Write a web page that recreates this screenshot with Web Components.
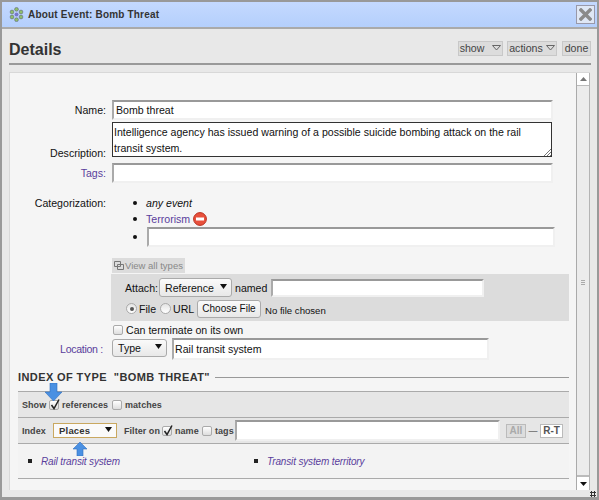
<!DOCTYPE html>
<html><head><meta charset="utf-8"><style>
html,body{margin:0;padding:0;background:#e8e8e8}
body{width:599px;height:500px;overflow:hidden;font:10.6px "Liberation Sans",Arial,sans-serif;color:#111}
</style></head><body>
<x-window></x-window>
<script>
function def(name,css,html){
  customElements.define(name,class extends HTMLElement{
    constructor(){super();const s=this.attachShadow({mode:'open'});
      s.innerHTML='<style>'+css+'</style>'+html;}
  });
}
def('x-field',`:host{display:block;box-sizing:border-box;background:#fff;border:2px solid #f0f0f0;border-top:2px solid #999;border-left:2px solid #aaa;padding:0 1px;white-space:nowrap;overflow:hidden;font:10.6px/16px "Liberation Sans",sans-serif;color:#111;flex:none}`,`<slot></slot>`);
def('x-check',`:host{display:inline-block;box-sizing:border-box;width:10px;height:10px;border:1px solid #aaa;border-radius:2px;background:linear-gradient(#fff,#ddd);position:relative;flex:none}
svg{position:absolute;left:0;top:-3px;display:none}:host([on]) svg{display:block}`,`<svg width="11" height="13" viewBox="0 0 11 13"><path d="M1.500 7l2.500 3.500L9 1.500" fill="none" stroke="#222" stroke-width="1.500"/></svg>`);
def('x-radio',`:host{display:inline-block;box-sizing:border-box;width:11px;height:11px;border:1px solid #aaa;border-radius:50%;background:linear-gradient(#e4e4e4,#fff);position:relative;flex:none}
:host([on])::after{content:"";position:absolute;left:2.500px;top:2.500px;width:4px;height:4px;border-radius:50%;background:#555}`,``);
def('x-select',`:host{display:flex;align-items:center;justify-content:space-between;box-sizing:border-box;height:19px;border:1px solid #aaa;border-radius:3px;background:linear-gradient(#fafafa,#e8e8e8);padding:0 4px 0 5px;font:10.6px "Liberation Sans",sans-serif;color:#111;flex:none}
svg{flex:none}`,`<slot></slot><svg width="7" height="5" viewBox="0 0 7 5" style="margin-top:-3px"><path d="M0 0h7L3.500 5z" fill="#111"/></svg>`);
def('x-head-btn',`:host{display:inline-flex;align-items:center;justify-content:center;box-sizing:border-box;height:15px;background:#dcdcdc;border:1px solid #c8c8c8;font:10.6px "Liberation Sans",sans-serif;color:#444;gap:6px}
svg{display:none}:host([menu]) svg{display:block}`,`<slot></slot><svg width="9" height="6" viewBox="0 0 9 6"><path d="M.5.5h8L4.500 5z" fill="none" stroke="#666"/></svg>`);
def('x-titlebar',`:host{display:flex;align-items:center;box-sizing:border-box;height:27px;background:linear-gradient(#c4d9ff,#b4cffc);border-bottom:2px solid #aaa;padding:0 2px 0 7px;font:bold 10px "Liberation Sans",sans-serif;color:#333}
.t{flex:1;margin-left:4px;letter-spacing:.19px}
.x{width:19px;height:19px;box-sizing:border-box;background:#dfe7f5;border:1px solid #fff;outline:1px solid #99a;outline-offset:-1px;display:flex;align-items:center;justify-content:center}`,
`<svg width="15" height="15" viewBox="0 0 15 15"><g fill="#8fbf6a" stroke="#557" stroke-width=".5"><circle cx="7.5" cy="2.3" r="1.9"/><circle cx="12" cy="5" r="1.9"/><circle cx="12" cy="10" r="1.9"/><circle cx="7.5" cy="12.7" r="1.9"/><circle cx="3" cy="10" r="1.9"/><circle cx="3" cy="5" r="1.9"/></g><circle cx="7.5" cy="7.5" r="2" fill="#77c"/></svg><span class="t"><slot></slot></span><span class="x"><svg width="13" height="13" viewBox="0 0 13 13"><path d="M2 2l9 9M11 2l-9 9" stroke="#8a8a8a" stroke-width="3.4" stroke-linecap="square"/></svg></span>`);
def('x-scrollbar',`:host{display:flex;flex-direction:column;justify-content:space-between;box-sizing:border-box;width:14px;background:#ececec;border-left:1px solid #aaa;border-right:1px solid #b4b4b4;position:relative;flex:none}
.b{height:12px;background:#fff;border-bottom:1px solid #bbb;display:flex;align-items:center;justify-content:center}
.b.d{border-bottom:0;border-top:2px solid #bbb;height:13px}
.g{position:absolute;left:4px;top:207px;width:4px;height:5px;border-top:1px solid #aaa;border-bottom:1px solid #aaa;box-sizing:border-box}.g::after{content:"";position:absolute;left:0;right:0;top:1px;height:1px;background:#aaa}`,
`<div class="b"><svg width="7" height="4"><path d="M0 4h7L3.500 0z" fill="#777"/></svg></div><div class="g"></div><div class="b d"><svg width="7" height="4"><path d="M0 0h7L3.500 4z" fill="#111"/></svg></div>`);
def('x-row',`:host{display:flex;box-sizing:border-box}`,`<slot></slot>`);
def('x-label',`:host{display:block;width:96px;margin-right:6px;text-align:right;flex:none;font:10.6px/16px "Liberation Sans",sans-serif;color:#111}
:host([link]){color:#5a3e9c}`,`<slot></slot>`);
def('x-tinybtn',`:host{display:inline-flex;align-items:center;justify-content:center;box-sizing:border-box;height:14px;font:bold 10px "Liberation Sans",sans-serif;border:1px solid #bbb;background:#fff;color:#555;flex:none;letter-spacing:0}
:host([off]){background:#ddd;color:#aaa}`,`<slot></slot>`);
def('x-bar',`:host{display:flex;align-items:center;box-sizing:border-box;background:#e6e6e6;border-bottom:1px solid #aaa;padding-left:4px;font:bold 9px "Liberation Sans",sans-serif;color:#444;letter-spacing:.05px;white-space:nowrap}`,`<slot></slot>`);
def('x-arrow',`:host{position:absolute;display:block}`,`<slot></slot>`);
def('x-form',`:host{display:block;position:relative;box-sizing:border-box;flex:1;min-width:0;padding-top:27px;font:10.6px "Liberation Sans",sans-serif;color:#111;overflow:hidden}
.a{color:#5a3e9c}
.bul{width:4px;height:4px;border-radius:50%;background:#111;flex:none;margin:0 9px 0 0}
.li{display:flex;align-items:center;height:16px;margin-left:123px;position:relative}
.view{display:flex;align-items:center;gap:1px;box-sizing:border-box;margin:0 0 1px 102px;width:73px;height:15px;background:#dcdcdc;padding-left:2px;color:#888;white-space:nowrap;font-size:9.5px}
.view svg{flex:none}
.att{box-sizing:border-box;margin-left:101px;width:458px;height:47px;background:#dcdcdc;padding:3px 0 0 14px;white-space:nowrap}
.r{display:flex;align-items:center}
.btn{display:flex;align-items:center;justify-content:center;box-sizing:border-box;width:64px;height:18px;border:1px solid #aaa;border-radius:3px;background:linear-gradient(#fafafa,#e8e8e8);color:#111;font-size:10px}
h3{display:flex;align-items:center;margin:9px 0 6px 8px;width:551px;font:bold 11px/16px "Liberation Sans",sans-serif;color:#333;letter-spacing:.4px;white-space:nowrap}
h3::after{content:"";flex:1;height:1px;background:#999;margin-left:5px}
.bars{margin-left:8px;width:551px;border-top:1px solid #aaa;position:relative}
.list{display:flex;height:35px;align-items:center;border-bottom:1px solid #aaa;background:#f3f3f3;font:italic 10px "Liberation Sans",sans-serif;letter-spacing:-.15px;color:#5a3e9c;padding-left:10px;box-sizing:border-box;white-space:nowrap}
.sq{width:4px;height:4px;background:#222;margin-right:9px;flex:none}
`,`
<x-row style="height:22px"><x-label style="padding-top:2px">Name:</x-label><x-field style="width:441px;height:20px;padding-left:2px">Bomb threat</x-field></x-row>
<x-row style="height:35px"><x-label style="padding-top:24px;line-height:14px;">Description:</x-label>
 <div style="box-sizing:border-box;width:440px;height:35px;background:#fff;border:1px solid #333;padding:1px;position:relative;line-height:16px;white-space:nowrap">Intelligence agency has issued warning of a possible suicide bombing attack on the rail<br>transit system.<svg width="7" height="7" style="position:absolute;right:0;bottom:0"><path d="M0 7L7 0M3 7L7 3M6 7L7 6" stroke="#777"/></svg></div></x-row>
<x-row style="height:20px;margin-top:6px"><x-label link style="padding-top:2px">Tags:</x-label><x-field style="width:441px;height:20px"></x-field></x-row>
<div style="position:relative;padding-top:11px">
 <x-label style="position:absolute;left:0;top:12px">Categorization:</x-label>
 <div style="height:64px;padding-top:1px;box-sizing:border-box">
  <div class="li"><i class="bul"></i><i>any event</i></div>
  <div class="li"><i class="bul"></i><span class="a">Terrorism</span><svg width="14" height="14" viewBox="0 0 14 14" style="margin-left:3px"><circle cx="7" cy="7" r="6.4" fill="#e8503c" stroke="#b83020"/><rect x="3" y="5.500" width="8" height="3" fill="#fff"/></svg></div>
  <div class="li" style="height:20px"><i class="bul" style="margin-right:10px"></i><x-field style="width:408px;height:20px"></x-field></div>
 </div>
</div>
<div class="view"><svg width="10" height="9" viewBox="0 0 10 9"><path d="M.5.5h6v5h-6zM3.500 3.500h6v5h-6z" fill="#dcdcdc" stroke="#777"/></svg><span>View all types</span></div>
<div class="att">
 <div class="r" style="height:21px"><span style="width:34px">Attach:</span><x-select style="width:73px;margin-right:3px">Reference</x-select><span style="width:33px">named</span><x-field style="width:213px;height:18px;margin-left:3px"></x-field></div>
 <div class="r" style="height:19px;margin-top:1px"><x-radio on style="margin-left:1px;margin-right:2px"></x-radio><span style="width:21px">File</span><x-radio style="margin-right:2px"></x-radio><span style="width:24px">URL</span><span class="btn">Choose File</span><span style="margin-left:4px;margin-top:3px;font-size:9.6px">No file chosen</span></div>
</div>
<div class="r" style="height:18px;margin-left:103px;gap:3px"><x-check></x-check>Can terminate on its own</div>
<x-row style="height:21px"><x-label link style="width:93px;margin-right:9px;padding-top:2px;letter-spacing:-.3px">Location :</x-label><x-select style="width:55px;height:18px">Type</x-select><x-field style="width:317px;height:22px;margin-left:5px;padding-left:1px;margin-top:-1px;line-height:19px">Rail transit system</x-field></x-row>
<h3><span>INDEX OF TYPE&nbsp; "BOMB THREAT"</span></h3>
<div class="bars">
 <x-bar style="height:26px"><span style="width:27px">Show</span><x-check on style="margin-right:3px"></x-check><span style="width:50px">references</span><x-check style="margin-right:3px"></x-check><span>matches</span></x-bar>
 <x-bar style="height:26px"><span style="width:31px">Index</span><x-select style="width:64px;height:15px;border-color:#c9a860;border-radius:0;background:#fafafa;letter-spacing:.2px;font-size:9.5px;font-weight:bold;color:#333">Places</x-select><span style="margin-left:7px;width:38px">Filter on</span><x-check on style="margin-right:3px"></x-check><span style="width:27px">name</span><x-check style="margin-right:3px"></x-check><span style="width:20px">tags</span><x-field style="width:265px;height:21px"></x-field><x-tinybtn off style="width:20px;margin-left:6px">All</x-tinybtn><span style="width:14px;text-align:center;font-weight:normal;color:#333">—</span><x-tinybtn style="width:23px">R-T</x-tinybtn></x-bar>
 <div class="list"><i class="sq"></i><span style="width:213px">Rail transit system</span><i class="sq"></i><span>Transit system territory</span></div>
 <x-arrow style="left:27px;top:-9px"><svg width="17" height="18" viewBox="0 0 17 18"><path d="M5 0h7v9h5l-8.500 9L0 9h5z" fill="#4a90e2" stroke="#2f6fc0" stroke-width=".6"/></svg></x-arrow>
 <x-arrow style="left:55px;top:50px"><svg width="14" height="14" viewBox="0 0 14 14"><path d="M7 0l7 7h-4v7H4V7H0z" fill="#4a90e2" stroke="#2f6fc0" stroke-width=".6"/></svg></x-arrow>
</div>`);
def('x-window',`:host{display:block;box-sizing:border-box;width:599px;height:500px;border:2px solid #999;border-width:2px 2px 3px 2px;background:#e8e8e8;position:relative;overflow:hidden}
.head{display:flex;align-items:center;height:36px;box-sizing:border-box;margin:0 6px 0 7px;border-bottom:2px solid #999;padding-top:8px}
h1{flex:1;margin:0;font:bold 16px "Liberation Sans",sans-serif;color:#333}
.panel{display:flex;margin:7px 7px 0 7px;height:418px;box-sizing:border-box;background:#f5f5f5;border:1px solid #d8d8d8;border-bottom:0;border-right:0}
.grip{position:absolute;right:1px;bottom:0;width:6px;height:6px;background:radial-gradient(#333 1px,transparent 1.2px) 0 0/3px 3px}
.btns{display:flex;margin-top:-4px}`,
`<x-titlebar>About Event: Bomb Threat</x-titlebar>
<div class="head"><h1>Details</h1><div class="btns"><x-head-btn menu style="width:45px;gap:8px;margin-right:4px">show</x-head-btn><x-head-btn menu style="width:50px;gap:3px;margin-right:5px">actions</x-head-btn><x-head-btn style="width:29px">done</x-head-btn></div></div>
<div class="panel"><x-form></x-form><x-scrollbar></x-scrollbar></div><div class="grip"></div>`);
</script></body></html>
